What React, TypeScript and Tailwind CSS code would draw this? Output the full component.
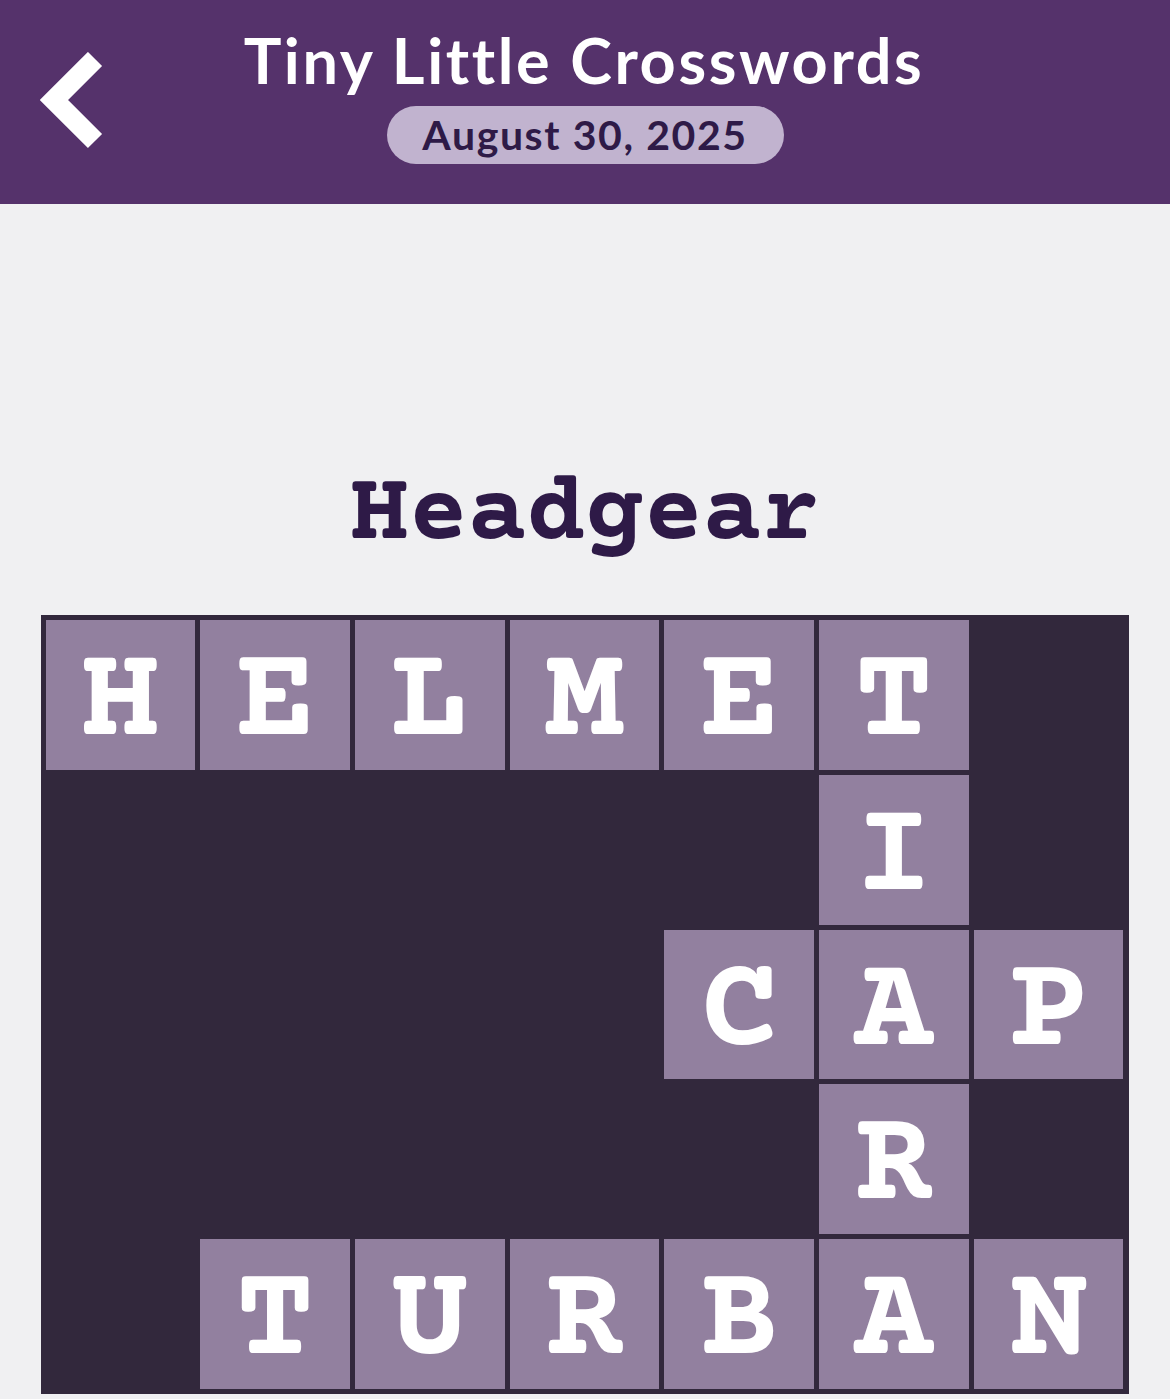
import React from "react";

// Puzzle layout: "." marks a blocked square
const ROWS = ["HELMET.", ".....I.", "....CAP", ".....R.", ".TURBAN"];

const SLAB = "'Courier Prime', 'Nimbus Mono PS', 'Nimbus Mono L', FreeMono, 'DejaVu Serif Condensed', 'DejaVu Serif', serif";

function BackChevron() {
  return (
    <svg width="70" height="100" viewBox="0 0 70 100" className="block">
      <polyline
        points="55,7 14,48 55,89"
        fill="none"
        stroke="white"
        strokeWidth="20"
        strokeLinecap="butt"
        strokeLinejoin="miter"
      />
    </svg>
  );
}

export default function App() {
  return (
    <div className="min-h-[1399px] w-full bg-[#f0f0f2]">
      <header className="relative h-[204px] bg-[#55326b] flex flex-col items-center">
        <button className="absolute left-[40px] top-[52px]" aria-label="Back">
          <BackChevron />
        </button>
        <h1
          className="mt-[22px] ml-[-2px] text-white text-[63px] leading-[76px] font-bold tracking-[2.6px]"
          style={{ fontFamily: "Lato, 'Open Sans', sans-serif" }}
        >
          Tiny Little Crosswords
        </h1>
        <div
          className="mt-[8px] h-[58px] w-[397px] rounded-full bg-[#c1b3cf] flex items-center justify-center text-[#2e1a47] text-[41px] font-bold tracking-[1.6px]"
          style={{ fontFamily: "Lato, 'Open Sans', sans-serif" }}
        >
          August 30, 2025
        </div>
      </header>

      <main className="flex flex-col items-center">
        <h2
          className="mt-[262px] text-[98px] leading-[100px] font-bold text-[#2e1a47]"
          style={{ fontFamily: SLAB }}
        >
          Headgear
        </h2>
        <div className="mt-[49px] ml-[-1px] w-[1088px] h-[779px] bg-[#32283c] p-[5px] grid grid-cols-7 grid-rows-5 gap-[5px]">
          {ROWS.flatMap((row, r) =>
            row.split("").map((ch, c) =>
              ch === "." ? (
                <div key={`${r}-${c}`} />
              ) : (
                <div
                  key={`${r}-${c}`}
                  className="bg-[#92809f] flex items-center justify-center pt-[20px] text-white text-[132px] leading-none font-bold"
                  style={{ fontFamily: SLAB }}
                >
                  {ch}
                </div>
              )
            )
          )}
        </div>
      </main>
    </div>
  );
}
